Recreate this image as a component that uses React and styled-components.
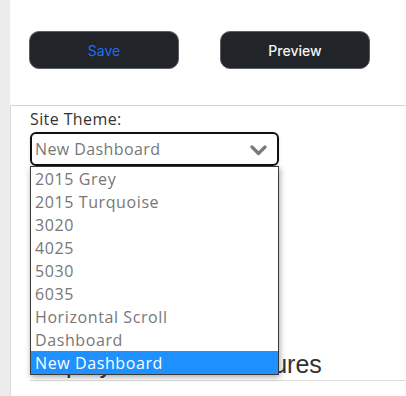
import React, { useState } from 'react';
import styled, { createGlobalStyle } from 'styled-components';

const themes = [
  '2015 Grey',
  '2015 Turquoise',
  '3020',
  '4025',
  '5030',
  '6035',
  'Horizontal Scroll',
  'Dashboard',
  'New Dashboard',
];

const App = () => {
  const [selected, setSelected] = useState('New Dashboard');
  const [open, setOpen] = useState(true);

  return (
    <>
      <GlobalStyle />
      <Page>
        <SideStrip />
        <Main>
          <Toolbar>
            <ActionButton $primary>Save</ActionButton>
            <ActionButton>Preview</ActionButton>
          </Toolbar>
          <Panel>
            <FieldLabel>Site Theme:</FieldLabel>
            <SelectWrap>
              <SelectBox onClick={() => setOpen(!open)}>
                <span>{selected}</span>
                <svg width="17" height="11" viewBox="0 0 17 11">
                  <polyline
                    points="2,2 8.5,8.5 15,2"
                    fill="none"
                    stroke="#7a7a7a"
                    strokeWidth="3.2"
                    strokeLinecap="round"
                    strokeLinejoin="round"
                  />
                </svg>
              </SelectBox>
              {open && (
                <OptionList>
                  {themes.map((t) => (
                    <Option
                      key={t}
                      $active={t === selected}
                      onClick={() => {
                        setSelected(t);
                        setOpen(false);
                      }}
                    >
                      {t}
                    </Option>
                  ))}
                </OptionList>
              )}
            </SelectWrap>
            <SectionTitle>Display Interface Features</SectionTitle>
          </Panel>
        </Main>
      </Page>
    </>
  );
};

const GlobalStyle = createGlobalStyle`
  html, body {
    margin: 0;
    padding: 0;
    background: #ffffff;
  }
`;

const Page = styled.div`
  display: flex;
  min-height: 396px;
`;

const SideStrip = styled.div`
  width: 10px;
  flex-shrink: 0;
  background: #ececec;
`;

const Main = styled.div`
  flex: 1;
  display: flex;
  flex-direction: column;
`;

const Toolbar = styled.div`
  display: flex;
  gap: 41px;
  padding: 31px 0 0 19px;
  height: 74px;
`;

const ActionButton = styled.button`
  width: 150px;
  height: 38px;
  background: #212529;
  border: 1px solid #5a5e63;
  border-radius: 10px;
  color: ${(p) => (p.$primary ? '#1d6cf5' : '#f4f4f4')};
  font-family: Inter, 'Liberation Sans', sans-serif;
  font-size: 14px;
  font-weight: ${(p) => (p.$primary ? 400 : 500)};
  cursor: pointer;
`;

const Panel = styled.div`
  flex: 1;
  border-top: 1px solid #d4d4d4;
  border-left: 1px solid #dcdcdc;
  padding: 3px 0 0 19px;
`;

const FieldLabel = styled.div`
  font-family: 'Open Sans', sans-serif;
  font-size: 16px;
  letter-spacing: 0.4px;
  color: #333;
  line-height: 20px;
  margin-bottom: 3px;
`;

const SelectWrap = styled.div`
  position: relative;
  width: 249px;
`;

const SelectBox = styled.div`
  box-sizing: border-box;
  height: 34px;
  border: 2px solid #111;
  border-radius: 6px;
  display: flex;
  align-items: center;
  justify-content: space-between;
  padding: 0 10px 0 3px;
  font-family: 'Open Sans', sans-serif;
  font-size: 16px;
  letter-spacing: 0.4px;
  color: #777;
  box-shadow: 0 1px 3px rgba(0, 0, 0, 0.15);
  cursor: pointer;

  svg {
    margin-top: 2px;
  }
`;

const OptionList = styled.div`
  position: absolute;
  top: 34px;
  left: 0;
  width: 249px;
  box-sizing: border-box;
  background: #fff;
  border: 1px solid #3a3a3a;
  box-shadow: 1px 2px 6px rgba(0, 0, 0, 0.35);
  z-index: 10;
`;

const Option = styled.div`
  height: 23px;
  line-height: 24px;
  padding-left: 4px;
  font-family: 'Open Sans', sans-serif;
  font-size: 16px;
  letter-spacing: 0.6px;
  color: ${(p) => (p.$active ? '#fff' : '#777')};
  background: ${(p) => (p.$active ? '#1e90ff' : 'transparent')};
  cursor: default;
`;

const SectionTitle = styled.h2`
  margin: 183px 0 0;
  padding-bottom: 1px;
  border-bottom: 1px solid #dddddd;
  font-family: 'Liberation Sans', Arial, sans-serif;
  font-size: 25px;
  font-weight: 400;
  line-height: 30px;
  color: #333;
`;

export default App;
